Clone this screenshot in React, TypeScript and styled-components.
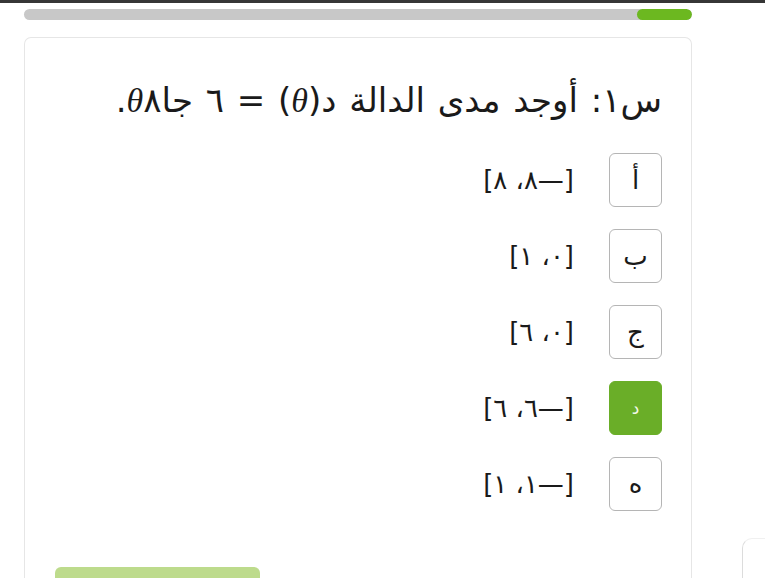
import React from "react"
import styled, { createGlobalStyle } from "styled-components"

const GlobalStyle = createGlobalStyle`
  html, body {
    margin: 0;
    padding: 0;
    background: #ffffff;
    overflow: hidden;
  }
  body {
    font-family: "Liberation Sans", "DejaVu Sans", sans-serif;
    color: #1a1a1a;
  }
`

const options = [
  { letter: "أ", value: "[٨ ،٨—]" },
  { letter: "ب", value: "[١ ،٠]" },
  { letter: "ج", value: "[٦ ،٠]" },
  { letter: "د", value: "[٦ ،٦—]", selected: true },
  { letter: "ه", value: "[١ ،١—]" },
]

export default function App() {
  return (
    <>
      <GlobalStyle />
      <Page>
        <TopStrip />
        <Body>
          <Main>
            <Progress>
              <ProgressFill />
            </Progress>
            <Card>
              <Question>س١: أوجد مدى الدالة د(<Theta>θ</Theta>) = ٦ جا٨<Theta>θ</Theta>.</Question>
              <Options>
                {options.map(o => (
                  <Row key={o.letter}>
                    <LetterBox selected={o.selected}>{o.letter}</LetterBox>
                    <Value>{o.value}</Value>
                  </Row>
                ))}
              </Options>
              <Footer>
                <CheckButton />
              </Footer>
            </Card>
          </Main>
          <SideStub />
        </Body>
      </Page>
    </>
  )
}

const Page = styled.div`
  width: 765px;
  height: 578px;
  display: flex;
  flex-direction: column;
  overflow: hidden;
`

const TopStrip = styled.div`
  height: 3px;
  background: #363636;
  flex-shrink: 0;
`

const Body = styled.div`
  display: flex;
  flex: 1;
`

const Main = styled.div`
  width: 668px;
  margin-left: 24px;
  display: flex;
  flex-direction: column;
`

const Progress = styled.div`
  height: 11px;
  margin-top: 6px;
  border-radius: 6px;
  background: #c8c8c8;
  display: flex;
  justify-content: flex-end;
  overflow: hidden;
`

const ProgressFill = styled.div`
  width: 55px;
  height: 100%;
  border-radius: 6px;
  background: #6cb820;
`

const Card = styled.div`
  margin-top: 17px;
  flex: 1;
  border: 1px solid #e6e6e6;
  border-bottom: none;
  border-radius: 7px 7px 0 0;
  padding: 42px 29px 0 30px;
  display: flex;
  flex-direction: column;
`

const Question = styled.div`
  direction: rtl;
  unicode-bidi: bidi-override;
  text-align: right;
  font-family: "DejaVu Sans", sans-serif;
  font-size: 34px;
  word-spacing: 2px;
  line-height: 40px;
  color: #1a1a1a;
`

const Theta = styled.span`
  font-family: "Liberation Serif", serif;
  font-style: italic;
`

const Options = styled.div`
  margin-top: 32px;
  display: flex;
  flex-direction: column;
  gap: 22px;
`

const Row = styled.div`
  display: flex;
  flex-direction: row-reverse;
  align-items: center;
  gap: 35px;
`

const LetterBox = styled.div<{ selected?: boolean }>`
  width: 53px;
  height: 54px;
  box-sizing: border-box;
  border-radius: 6px;
  border: 1px solid ${p => (p.selected ? "#6aae28" : "#b5b5b5")};
  background: ${p => (p.selected ? "#6aae28" : "#ffffff")};
  color: ${p => (p.selected ? "#f3f8ea" : "#1a1a1a")};
  display: flex;
  align-items: center;
  justify-content: center;
  font-family: "DejaVu Sans", sans-serif;
  font-size: ${p => (p.selected ? "17px" : "26px")};
`

const Value = styled.div`
  direction: ltr;
  unicode-bidi: bidi-override;
  font-family: "DejaVu Sans", sans-serif;
  font-size: 26px;
  color: #1a1a1a;
`

const Footer = styled.div`
  margin-top: 56px;
  display: flex;
`

const CheckButton = styled.div`
  width: 205px;
  height: 40px;
  border-radius: 6px;
  background: #bddb8c;
`

const SideStub = styled.div`
  margin-left: 50px;
  margin-top: 535px;
  flex: 1;
  border-left: 1.5px solid #dcdcdc;
  border-top: 1.5px solid #f0f0f0;
  border-top-left-radius: 10px;
`
